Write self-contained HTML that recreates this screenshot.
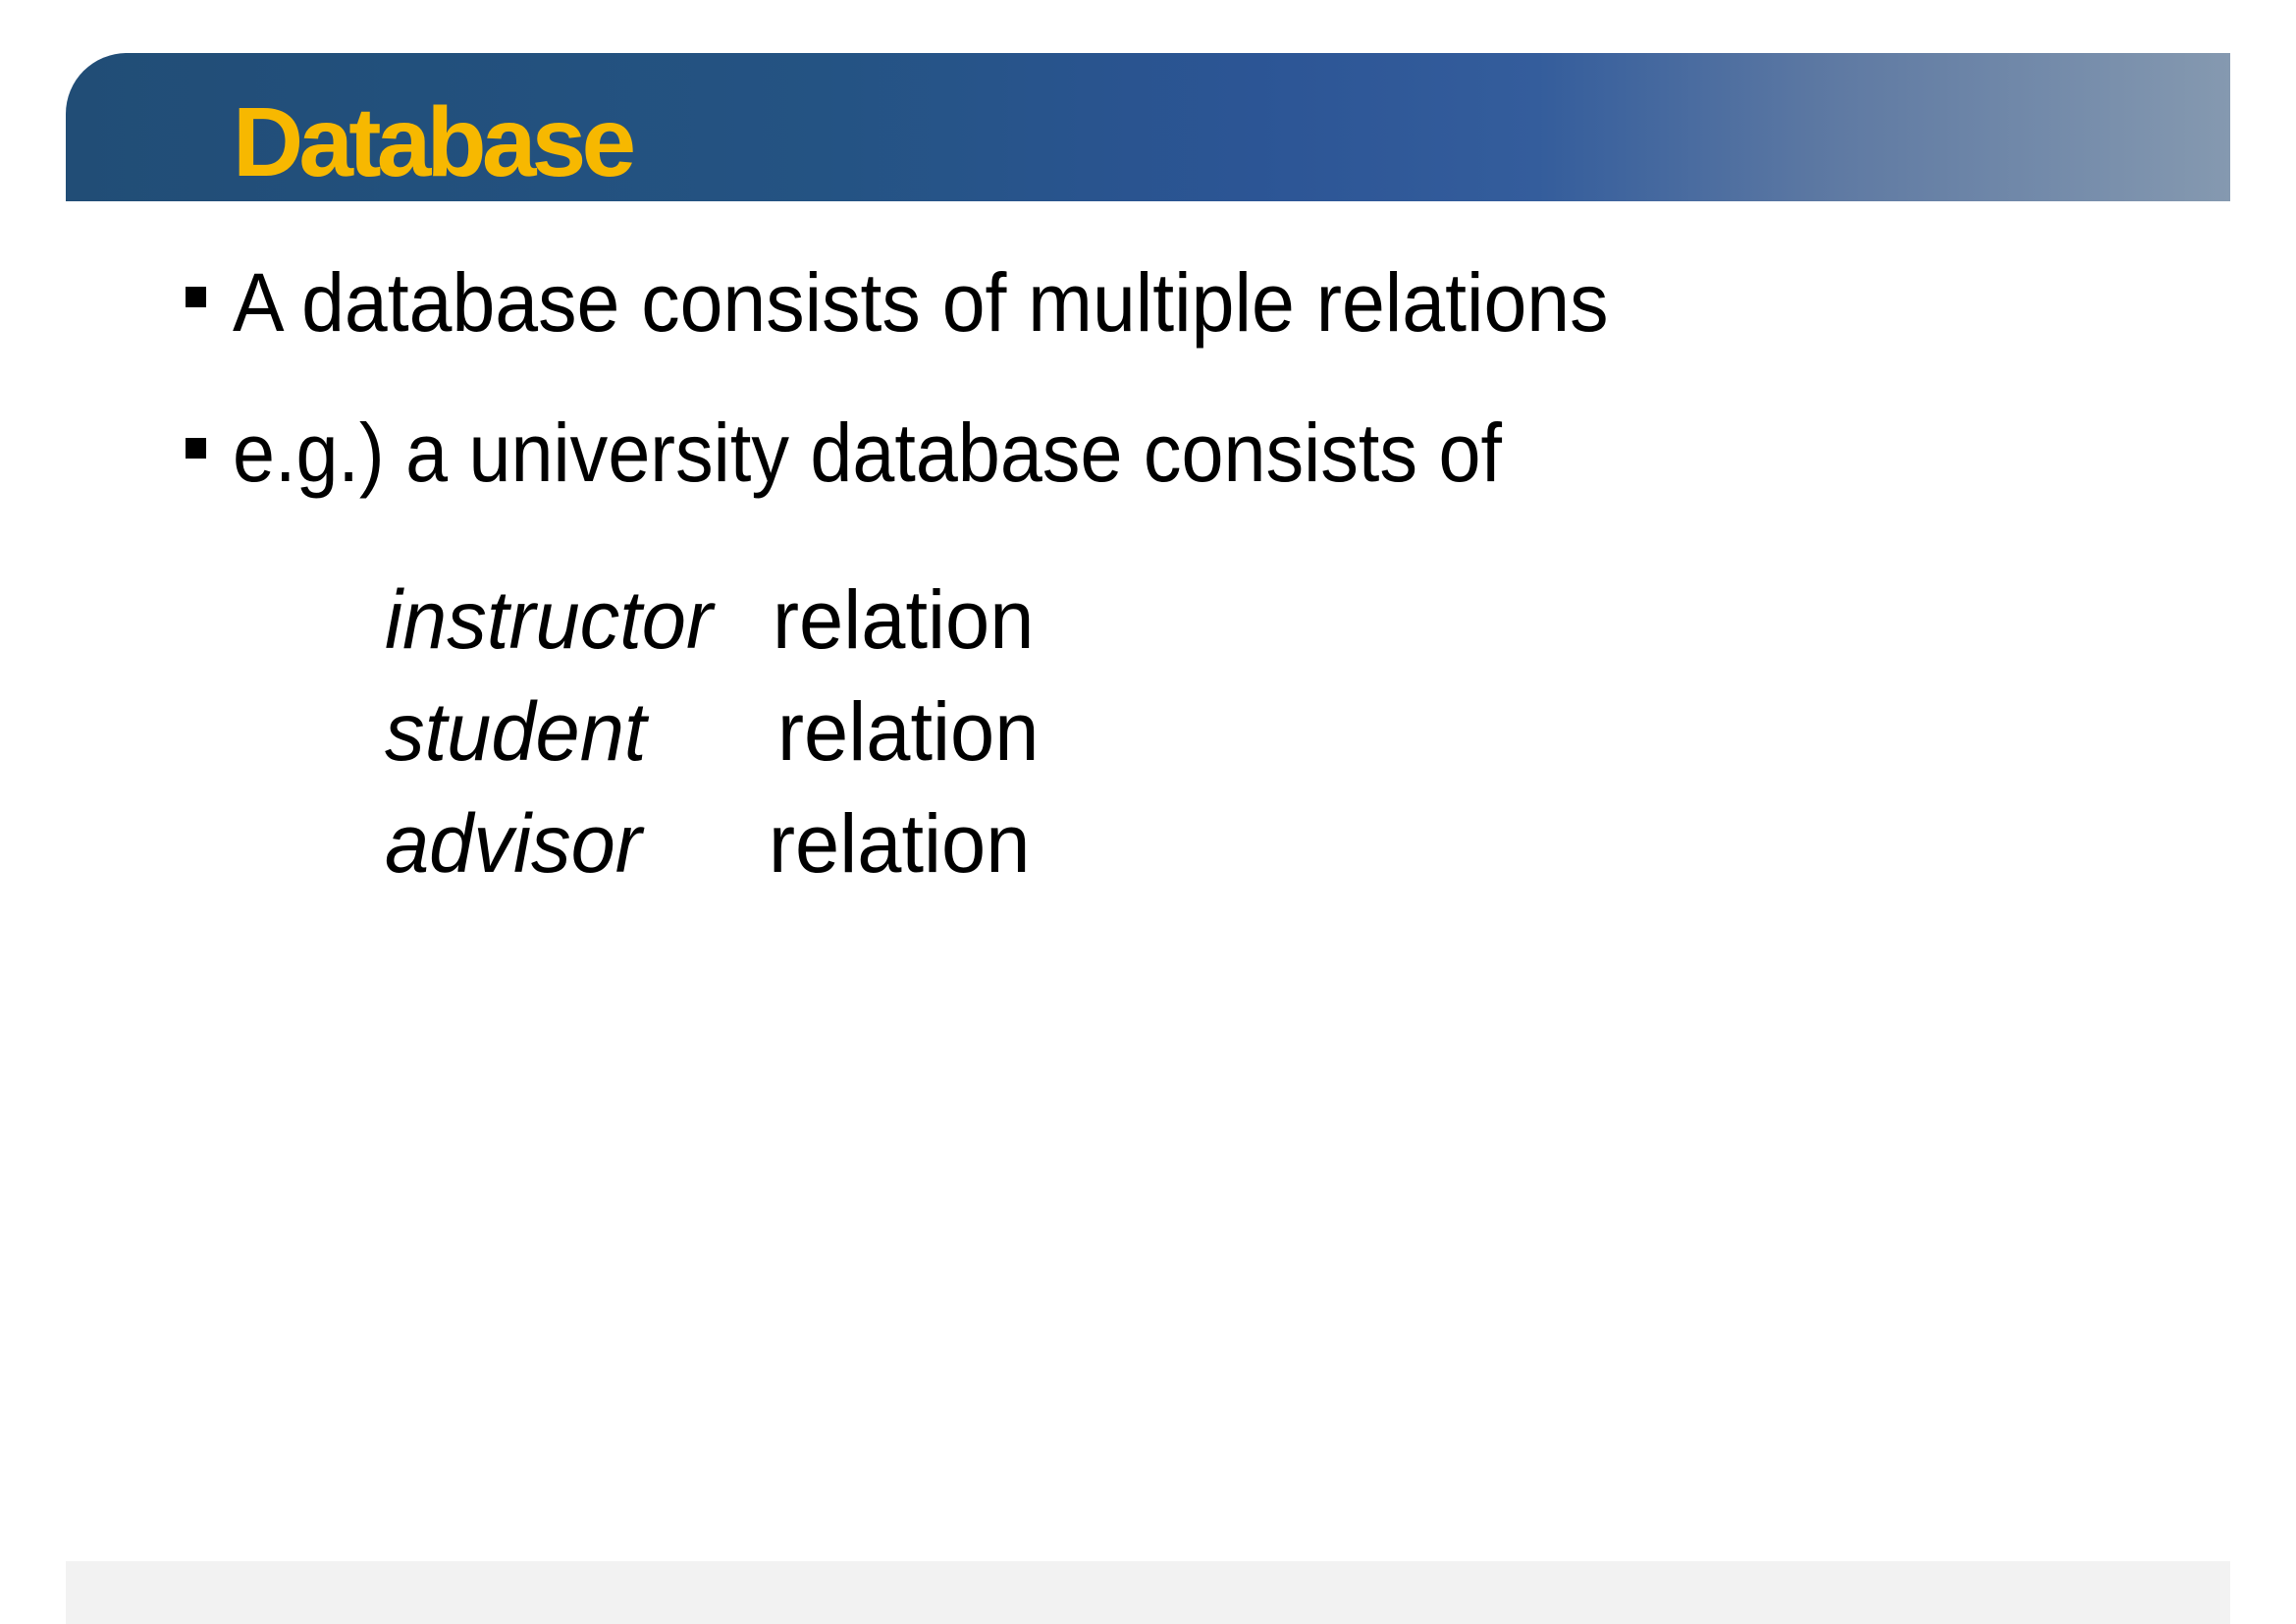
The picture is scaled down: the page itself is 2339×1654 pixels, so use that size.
<!DOCTYPE html>
<html><head><style>
body{margin:0;width:2339px;height:1654px;background:#fff;position:relative;overflow:hidden;font-family:"Liberation Sans",sans-serif}
.hdr{position:absolute;left:67px;top:54px;width:2205px;height:151px;border-top-left-radius:62px;background:linear-gradient(90deg,#214d76 0%,#245383 35%,#2c5595 55%,#345d9c 68%,#5f7aa3 82%,#8599b0 100%)}
.t{position:absolute;left:237px;top:95px;font-size:100px;line-height:100px;font-weight:bold;color:#f7b800;letter-spacing:-4.8px}
.l{position:absolute;font-size:84px;line-height:84px;color:#000;white-space:nowrap;transform-origin:left}
.sq{position:absolute;width:21px;height:21px;background:#000}
.foot{position:absolute;left:67px;top:1590px;width:2205px;height:64px;background:#f2f2f2}
i{font-style:italic}
</style></head><body>
<div class="hdr"></div>
<div class="t">Database</div>
<div class="sq" style="left:189px;top:292px"></div>
<div class="l" style="left:237px;top:266px;transform:scaleX(0.938)">A database consists of multiple relations</div>
<div class="sq" style="left:189px;top:446px"></div>
<div class="l" style="left:237px;top:419px;transform:scaleX(0.92)">e.g.) a university database consists of</div>
<div class="l" style="left:392px;top:589px;transform:scaleX(0.967)"><i>instructor</i></div>
<div class="l" style="left:787px;top:589px;transform:scaleX(0.967)">relation</div>
<div class="l" style="left:392px;top:703px;transform:scaleX(0.967)"><i>student</i></div>
<div class="l" style="left:792px;top:703px;transform:scaleX(0.967)">relation</div>
<div class="l" style="left:392px;top:817px;transform:scaleX(0.967)"><i>advisor</i></div>
<div class="l" style="left:783px;top:817px;transform:scaleX(0.967)">relation</div>
<div class="foot"></div>
</body></html>
